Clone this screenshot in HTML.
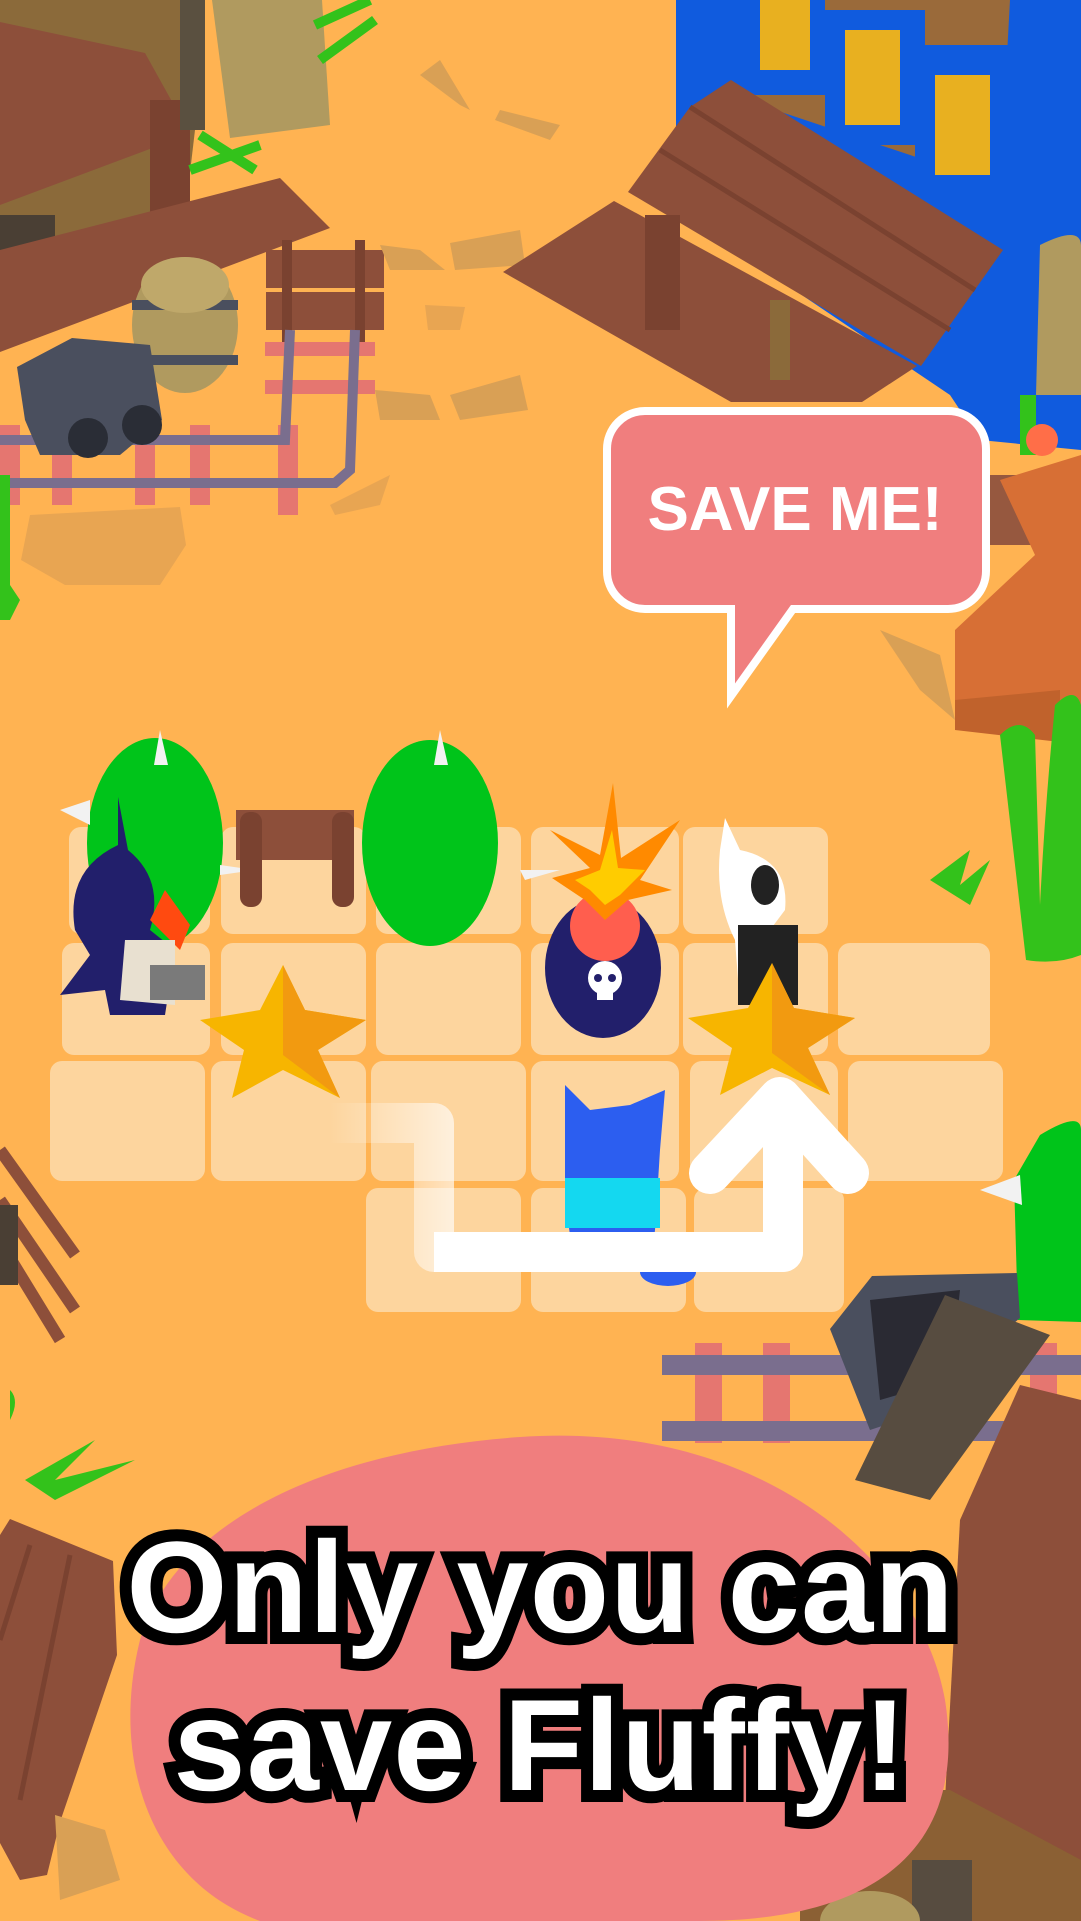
<!DOCTYPE html>
<html><head><meta charset="utf-8"><style>
html,body{margin:0;padding:0;}
body{width:1081px;height:1921px;overflow:hidden;background:#FFB352;position:relative;font-family:"Liberation Sans",sans-serif;}
svg{position:absolute;left:0;top:0;}
.t{position:absolute;left:0;width:1081px;text-align:center;font-weight:bold;color:#fff;font-size:130px;letter-spacing:1px;white-space:nowrap;
-webkit-text-stroke:24px #000;paint-order:stroke fill;text-shadow:0 10px 0 #000;}
</style></head><body>
<svg width="1081" height="1921" viewBox="0 0 1081 1921">
<!-- top left building -->
<polygon points="0,0 190,0 195,130 175,300 0,300" fill="#8B6A3A"/>
<polygon points="0,22 145,53 190,134 0,205" fill="#8D4F3A"/>
<rect x="150" y="100" width="40" height="160" fill="#7A4230"/>
<rect x="0" y="215" width="55" height="50" fill="#4A3F34"/>
<rect x="180" y="0" width="25" height="130" fill="#5A5040"/>
<polygon points="212,0 322,0 330,125 230,138" fill="#B09A5F"/>
<path d="M315,25 L370,0 M320,60 L375,20 M200,135 L255,170 M190,170 L260,145" stroke="#33C21B" stroke-width="10" fill="none"/>
<polygon points="0,250 280,178 330,228 0,352" fill="#8D4F3A"/>
<!-- barrel -->
<ellipse cx="185" cy="325" rx="53" ry="68" fill="#B09A5F"/>
<rect x="132" y="300" width="106" height="10" fill="#4A4F5E"/>
<rect x="140" y="355" width="98" height="10" fill="#4A4F5E"/>
<ellipse cx="185" cy="285" rx="44" ry="28" fill="#BFA86A"/>
<!-- sign -->
<rect x="266" y="250" width="118" height="38" fill="#8D4F3A"/>
<rect x="266" y="292" width="118" height="38" fill="#8D4F3A"/>
<rect x="282" y="240" width="10" height="110" fill="#7A4230"/><rect x="355" y="240" width="10" height="110" fill="#7A4230"/>
<!-- rails -->
<g fill="#E57670">
<rect x="0" y="425" width="20" height="80"/><rect x="52" y="425" width="20" height="80"/><rect x="135" y="425" width="20" height="80"/><rect x="190" y="425" width="20" height="80"/><rect x="278" y="425" width="20" height="90"/>
<rect x="265" y="342" width="110" height="14"/><rect x="265" y="380" width="110" height="14"/>
</g>
<path d="M0,440 L285,440 L290,330 M0,483 L335,483 L350,470 L355,330" stroke="#7A6E8E" stroke-width="10" fill="none"/>
<!-- minecart -->
<polygon points="17,367 72,338 150,345 162,420 120,455 40,455 25,420" fill="#4A4F5E"/>
<circle cx="88" cy="438" r="20" fill="#2A2D36"/><circle cx="142" cy="425" r="20" fill="#2A2D36"/>
<polygon points="30,515 180,507 186,545 160,585 65,585 21,560" fill="#E8A552"/>
<path d="M0,475 L10,475 L10,585 L20,600 L10,620 L0,620Z" fill="#33C21B"/>
<!-- debris -->
<polygon points="440,60 470,110 460,105 420,75" fill="#D9A055"/>
<polygon points="500,110 560,125 550,140 495,120" fill="#D9A055"/>
<polygon points="380,245 420,250 445,270 390,270" fill="#D9A055"/>
<polygon points="450,243 520,230 525,265 455,270" fill="#D9A055"/>
<polygon points="425,305 465,307 460,330 428,330" fill="#E8A552"/>
<polygon points="375,390 430,395 440,420 380,420" fill="#D9A055"/>
<polygon points="450,395 520,375 528,410 460,420" fill="#D9A055"/>
<polygon points="330,505 390,475 380,505 335,515" fill="#E8A552"/>
<!-- blue building -->
<polygon points="676,0 1081,0 1081,450 980,440 950,395 676,210" fill="#105BDE"/>
<polygon points="745,0 1010,0 1000,185 745,100" fill="#9A6A3A"/>
<g fill="#105BDE"><rect x="745" y="0" width="80" height="95"/><rect x="825" y="10" width="100" height="135"/><rect x="915" y="45" width="95" height="150"/></g>
<g fill="#E8B020"><rect x="760" y="0" width="50" height="70"/><rect x="845" y="30" width="55" height="95"/><rect x="935" y="75" width="55" height="100"/></g>
<polygon points="628,192 690,107 731,80 1003,250 921,366" fill="#8D4F3A"/>
<path d="M690,107 L975,290 M660,150 L950,330" stroke="#7A4230" stroke-width="5"/>
<polygon points="503,272 614,201 917,366 862,402 731,402" fill="#8D4F3A"/>
<rect x="645" y="215" width="35" height="115" fill="#7A4230"/>
<rect x="770" y="300" width="20" height="80" fill="#8B6A3A"/>
<path d="M1040,245 q40,-20 41,0 v150 h-45Z" fill="#B09A5F"/>
<rect x="1020" y="395" width="16" height="60" fill="#33C21B"/>
<circle cx="1042" cy="440" r="16" fill="#FF6E48"/>
<rect x="985" y="475" width="60" height="70" fill="#96583F"/>
<!-- orange rock -->
<polygon points="1000,480 1081,455 1081,740 1060,742 955,725 955,630 1035,555" fill="#D76F35"/>
<polygon points="955,700 1060,690 1060,742 955,730" fill="#C0622C"/>
<polygon points="880,630 940,655 955,720 920,690" fill="#D9A055"/>
<!-- right tall cactus -->
<path d="M1000,735 q20,-20 35,0 l5,170 q5,-100 15,-200 q20,-20 26,0 v250 q-25,10 -55,5 z" fill="#33C21B"/>
<path d="M930,880 l40,-30 l-10,35 l30,-25 l-20,45 z" fill="#33C21B"/>
<!-- tiles -->
<g fill="#FDD59E">
<rect x="69" y="827" width="141" height="107" rx="12"/><rect x="221" y="827" width="145" height="107" rx="12"/><rect x="376" y="827" width="145" height="107" rx="12"/><rect x="531" y="827" width="148" height="107" rx="12"/><rect x="683" y="827" width="145" height="107" rx="12"/>
<rect x="62" y="943" width="148" height="112" rx="12"/><rect x="221" y="943" width="145" height="112" rx="12"/><rect x="376" y="943" width="145" height="112" rx="12"/><rect x="531" y="943" width="148" height="112" rx="12"/><rect x="683" y="943" width="145" height="112" rx="12"/><rect x="838" y="943" width="152" height="112" rx="12"/>
<rect x="50" y="1061" width="155" height="120" rx="12"/><rect x="211" y="1061" width="155" height="120" rx="12"/><rect x="371" y="1061" width="155" height="120" rx="12"/><rect x="531" y="1061" width="148" height="120" rx="12"/><rect x="690" y="1061" width="148" height="120" rx="12"/><rect x="848" y="1061" width="155" height="120" rx="12"/>
<rect x="366" y="1188" width="155" height="124" rx="12"/><rect x="531" y="1188" width="155" height="124" rx="12"/><rect x="694" y="1188" width="150" height="124" rx="12"/>
</g>
<!-- cacti -->
<ellipse cx="155" cy="843" rx="68" ry="105" fill="#00C41A"/>
<ellipse cx="430" cy="843" rx="68" ry="103" fill="#00C41A"/>
<g fill="#F2F2F2"><polygon points="160,730 168,765 154,765"/><polygon points="440,730 448,765 434,765"/><polygon points="60,810 90,800 90,825"/><polygon points="520,870 560,870 525,880"/><polygon points="220,865 255,870 220,875"/></g>
<!-- fence -->
<rect x="236" y="810" width="118" height="50" fill="#8D4F3A"/>
<rect x="240" y="812" width="22" height="95" rx="10" fill="#7A4230"/><rect x="332" y="812" width="22" height="95" rx="10" fill="#7A4230"/>
<!-- enemy -->
<path d="M118,797 L128,850 Q165,880 150,930 L175,950 L165,1015 L110,1015 L105,990 L60,995 L90,955 L75,930 Q65,870 118,845Z" fill="#221F6B"/>
<path d="M165,890 L190,925 L180,950 L150,920Z" fill="#FF4A10"/>
<path d="M125,940 L175,940 L175,1005 L120,1000Z" fill="#E8E0D0"/>
<rect x="150" y="965" width="55" height="35" fill="#7A7A7A"/>
<!-- bomb -->
<ellipse cx="603" cy="968" rx="58" ry="70" fill="#221F6B"/>
<circle cx="605" cy="926" r="35" fill="#FF5E4E"/>
<polygon points="613,783 621,858 680,820 640,880 672,890 628,900 605,920 585,900 552,878 590,868 550,830 600,855" fill="#FF8A00"/>
<polygon points="612,830 618,868 645,870 620,895 605,905 590,890 575,880 600,870" fill="#FFCC00"/>
<circle cx="605" cy="978" r="17" fill="#fff"/><rect x="597" y="988" width="16" height="12" fill="#fff"/>
<circle cx="598" cy="978" r="4" fill="#221F6B"/><circle cx="612" cy="978" r="4" fill="#221F6B"/>
<!-- white cat -->
<path d="M725,818 L740,850 Q790,860 785,910 L770,930 L790,1000 L740,1005 L735,940 Q715,900 720,850Z" fill="#fff"/>
<ellipse cx="765" cy="885" rx="14" ry="20" fill="#222"/>
<rect x="738" y="925" width="60" height="80" fill="#222"/>
<!-- stars -->
<g>
<polygon points="283,965 305,1010 366,1020 318,1050 340,1098 283,1070 232,1098 244,1050 200,1020 260,1010" fill="#F7B500"/>
<polygon points="283,965 283,1055 340,1098 318,1050 366,1020 305,1010" fill="#F29A10"/>
<polygon points="772,963 794,1008 855,1018 808,1048 830,1095 772,1068 720,1095 732,1048 688,1018 748,1008" fill="#F7B500"/>
<polygon points="772,963 772,1053 830,1095 808,1048 855,1018 794,1008" fill="#F29A10"/>
</g>
<!-- blue cat -->
<path d="M565,1085 L590,1110 L630,1105 L665,1090 L660,1150 L655,1230 L650,1270 L575,1270 L565,1200Z" fill="#2C5EF0"/>
<rect x="565" y="1178" width="95" height="50" fill="#14D8F0"/>
<ellipse cx="668" cy="1272" rx="28" ry="14" fill="#2C5EF0"/>
<!-- arrow -->
<defs><linearGradient id="g" x1="330" x2="520" y1="0" y2="0" gradientUnits="userSpaceOnUse"><stop offset="0" stop-color="#fff" stop-opacity=".0"/><stop offset="1" stop-color="#fff"/></linearGradient></defs>
<path d="M331,1123 L434,1123 L434,1252 L783,1252 L783,1100" stroke="url(#g)" stroke-width="40" fill="none" stroke-linejoin="round"/>
<path d="M434,1252 L783,1252 L783,1100" stroke="#fff" stroke-width="40" fill="none" stroke-linejoin="round"/>
<path d="M710,1173 L780,1098 L848,1173" stroke="#fff" stroke-width="42" fill="none" stroke-linecap="round" stroke-linejoin="round"/>
<!-- right cactus -->
<path d="M1040,1135 Q1081,1110 1081,1130 L1081,1322 L1018,1320 L1014,1180Z" fill="#00C41A"/>
<polygon points="980,1190 1020,1175 1022,1205" fill="#F2F2F2"/>
<!-- left sticks -->
<path d="M0,1150 L75,1255 M0,1200 L75,1310 M5,1250 L60,1340" stroke="#8D4F3A" stroke-width="12" fill="none"/>
<rect x="0" y="1205" width="18" height="80" fill="#4A3F34"/>
<path d="M10,1390 q10,10 0,30z M25,1480 l70,-40 l-40,40 l80,-20 l-80,40z" fill="#33C21B"/>
<!-- bottom right -->
<g fill="#E57670"><rect x="695" y="1343" width="27" height="100"/><rect x="763" y="1343" width="27" height="100"/><rect x="1030" y="1343" width="27" height="100"/></g>
<rect x="662" y="1355" width="419" height="20" fill="#7A6E8E"/>
<rect x="662" y="1421" width="419" height="20" fill="#7A6E8E"/>
<polygon points="830,1329 872,1276 1017,1273 1020,1318 900,1420 870,1430" fill="#4A4F5E"/>
<polygon points="870,1300 960,1290 950,1380 880,1400" fill="#2A2A33"/>
<polygon points="945,1295 1050,1335 930,1500 855,1480" fill="#574C40"/>
<polygon points="1020,1385 1081,1400 1081,1880 1000,1850 945,1800 960,1520" fill="#8D4F3A"/>
<polygon points="800,1790 950,1790 1081,1860 1081,1921 800,1921" fill="#8B6034"/>
<rect x="912" y="1860" width="60" height="61" fill="#574C40"/>
<ellipse cx="870" cy="1921" rx="50" ry="30" fill="#B09A5F"/>
<!-- bottom left -->
<polygon points="0,1535 10,1519 113,1561 117,1655 60,1822 47,1875 20,1880 0,1843" fill="#8D4F3A"/>
<path d="M30,1545 L0,1640 M70,1555 L20,1800" stroke="#7A4230" stroke-width="5"/>
<polygon points="55,1815 105,1830 120,1880 60,1900" fill="#D9A055"/>
<!-- pink blob -->
<path d="M520,1437 C760,1420 920,1560 945,1700 C970,1860 860,1921 700,1921 L260,1921 C150,1880 110,1760 140,1640 C175,1520 330,1450 520,1437Z" fill="#F07E7E"/>
<!-- speech bubble -->
<path d="M645,411 H948 A38,38 0 0 1 986,449 V571 A38,38 0 0 1 948,609 H793 L731,696 L731,609 H645 A38,38 0 0 1 607,571 V449 A38,38 0 0 1 645,411Z" fill="#F07E7E" stroke="#fff" stroke-width="8" stroke-linejoin="miter"/>
<text x="795" y="530" text-anchor="middle" font-family="Liberation Sans" font-weight="bold" font-size="62" fill="#fff">SAVE ME!</text>
</svg>
<div class="t" style="top:1512px;">Only you can</div>
<div class="t" style="top:1670px;">save Fluffy!</div>
</body></html>
